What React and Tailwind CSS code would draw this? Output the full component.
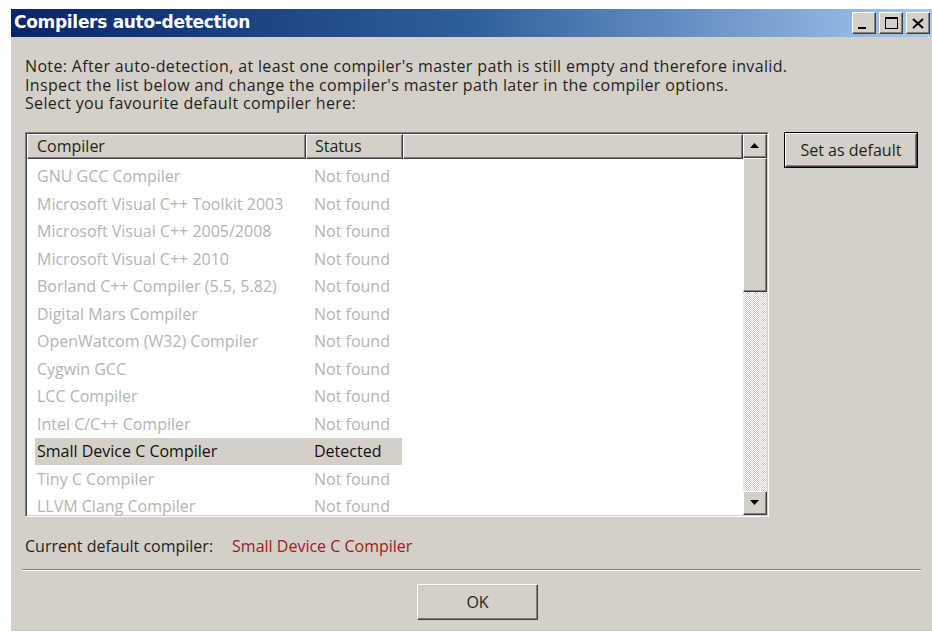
import { useState } from "react";

const compilers = [
  { name: "GNU GCC Compiler", status: "Not found" },
  { name: "Microsoft Visual C++ Toolkit 2003", status: "Not found" },
  { name: "Microsoft Visual C++ 2005/2008", status: "Not found" },
  { name: "Microsoft Visual C++ 2010", status: "Not found" },
  { name: "Borland C++ Compiler (5.5, 5.82)", status: "Not found" },
  { name: "Digital Mars Compiler", status: "Not found" },
  { name: "OpenWatcom (W32) Compiler", status: "Not found" },
  { name: "Cygwin GCC", status: "Not found" },
  { name: "LCC Compiler", status: "Not found" },
  { name: "Intel C/C++ Compiler", status: "Not found" },
  { name: "Small Device C Compiler", status: "Detected" },
  { name: "Tiny C Compiler", status: "Not found" },
  { name: "LLVM Clang Compiler", status: "Not found" },
];

// classic raised 3d edge
const raised =
  "border border-t-white border-l-white border-r-[#404040] border-b-[#404040] shadow-[inset_-1px_-1px_0_#808080]";

const CaptionButton = ({ children }) => (
  <div className={`w-[24px] h-[22px] bg-[#d4d0c8] flex items-center justify-center ${raised}`}>
    {children}
  </div>
);

const ScrollButton = ({ up }) => (
  <div className={`w-[24px] h-[24px] bg-[#d4d0c8] flex items-center justify-center ${raised}`}>
    <svg width="9" height="6" viewBox="0 0 9 6">
      {up ? <polygon points="0,5 9,5 4.5,0" fill="#000" /> : <polygon points="0,0 9,0 4.5,5" fill="#000" />}
    </svg>
  </div>
);

export default function App() {
  const [selected] = useState("Small Device C Compiler");

  return (
    <div className="min-h-screen bg-white pl-[11px] pt-[9px] font-['Open_Sans',sans-serif]">
      <div className="bg-[#d4d0c8] h-[622px] flex flex-col">
        {/* title bar */}
        <div className="h-[28px] flex items-center justify-between pl-[3px] pr-[2px] bg-gradient-to-r from-[#0a246a] via-[#2f5f9c] to-[#a6caf0]">
          <span className="text-white font-bold text-[17px] font-['DejaVu_Sans',sans-serif] tracking-[-0.3px]">
            Compilers auto-detection
          </span>
          <div className="flex gap-[3px]">
            <CaptionButton>
              <div className="w-[8px] h-[2px] bg-black mt-[10px] mr-[4px]" />
            </CaptionButton>
            <CaptionButton>
              <div className="w-[13px] h-[12px] border border-black border-t-[2px]" />
            </CaptionButton>
            <CaptionButton>
              <svg width="12" height="11" viewBox="0 0 12 11">
                <path d="M1 1 L11 10 M11 1 L1 10" stroke="#000" strokeWidth="2" />
              </svg>
            </CaptionButton>
          </div>
        </div>

        <div className="px-[14px] pt-[20px] flex flex-col flex-1 text-[16px] text-[#1f1f1f]">
          <div className="leading-[18.5px] tracking-[0.35px]">
            <p>Note: After auto-detection, at least one compiler's master path is still empty and therefore invalid.</p>
            <p>Inspect the list below and change the compiler's master path later in the compiler options.</p>
            <p>Select you favourite default compiler here:</p>
          </div>

          <div className="flex gap-[15px] mt-[19px]">
            {/* list view */}
            <div className="w-[749px] h-[385px] border border-t-[#808080] border-l-[#808080] border-r-white border-b-white">
              <div className="h-full border border-t-[#404040] border-l-[#404040] border-r-[#d4d0c8] border-b-[#d4d0c8] flex bg-white">
                <div className="flex-1 flex flex-col">
                  <div className="flex h-[25px] bg-[#d4d0c8]">
                    <div className={`w-[279px] pl-[9px] flex items-center ${raised}`}>Compiler</div>
                    <div className={`w-[97px] pl-[8px] flex items-center ${raised}`}>Status</div>
                    <div className={`flex-1 ${raised}`} />
                  </div>
                  <div className="pt-[4px]">
                    {compilers.map((c) => {
                      const on = c.name === selected;
                      return (
                        <div key={c.name} className="flex h-[27.5px] items-center pl-[8px]">
                          <div className={`flex h-full items-center ${on ? "bg-[#d4d0c8] text-[#111]" : "text-[#b4b4b4]"}`}>
                            <span className="w-[279px] pl-[2px]">{c.name}</span>
                            <span className="w-[88px]">{c.status}</span>
                          </div>
                        </div>
                      );
                    })}
                  </div>
                </div>
                {/* vertical scrollbar */}
                <div className="w-[24px] flex flex-col bg-[repeating-conic-gradient(#ffffff_0%_25%,#d4d0c8_0%_50%)] bg-[length:2px_2px]">
                  <ScrollButton up />
                  <div className={`h-[134px] bg-[#d4d0c8] ${raised}`} />
                  <div className="flex-1" />
                  <ScrollButton />
                </div>
              </div>
            </div>

            <div className="h-[36px] w-[135px] flex items-center justify-center bg-[#d4d0c8] border border-black">
              <div className={`w-full h-full flex items-center justify-center ${raised}`}>Set as default</div>
            </div>
          </div>

          <div className="mt-[17px] flex gap-[19px]">
            <span>Current default compiler:</span>
            <span className="text-[#9b1b22]">{selected}</span>
          </div>

          <div className="mt-[11px] -mx-[3px] h-[2px] border-t border-[#808080] border-b border-b-white" />

          <div className="flex justify-center mt-[13px] pl-[12px]">
            <div className={`w-[121px] h-[36px] flex items-center justify-center ${raised}`}>OK</div>
          </div>
        </div>
      </div>
    </div>
  );
}
